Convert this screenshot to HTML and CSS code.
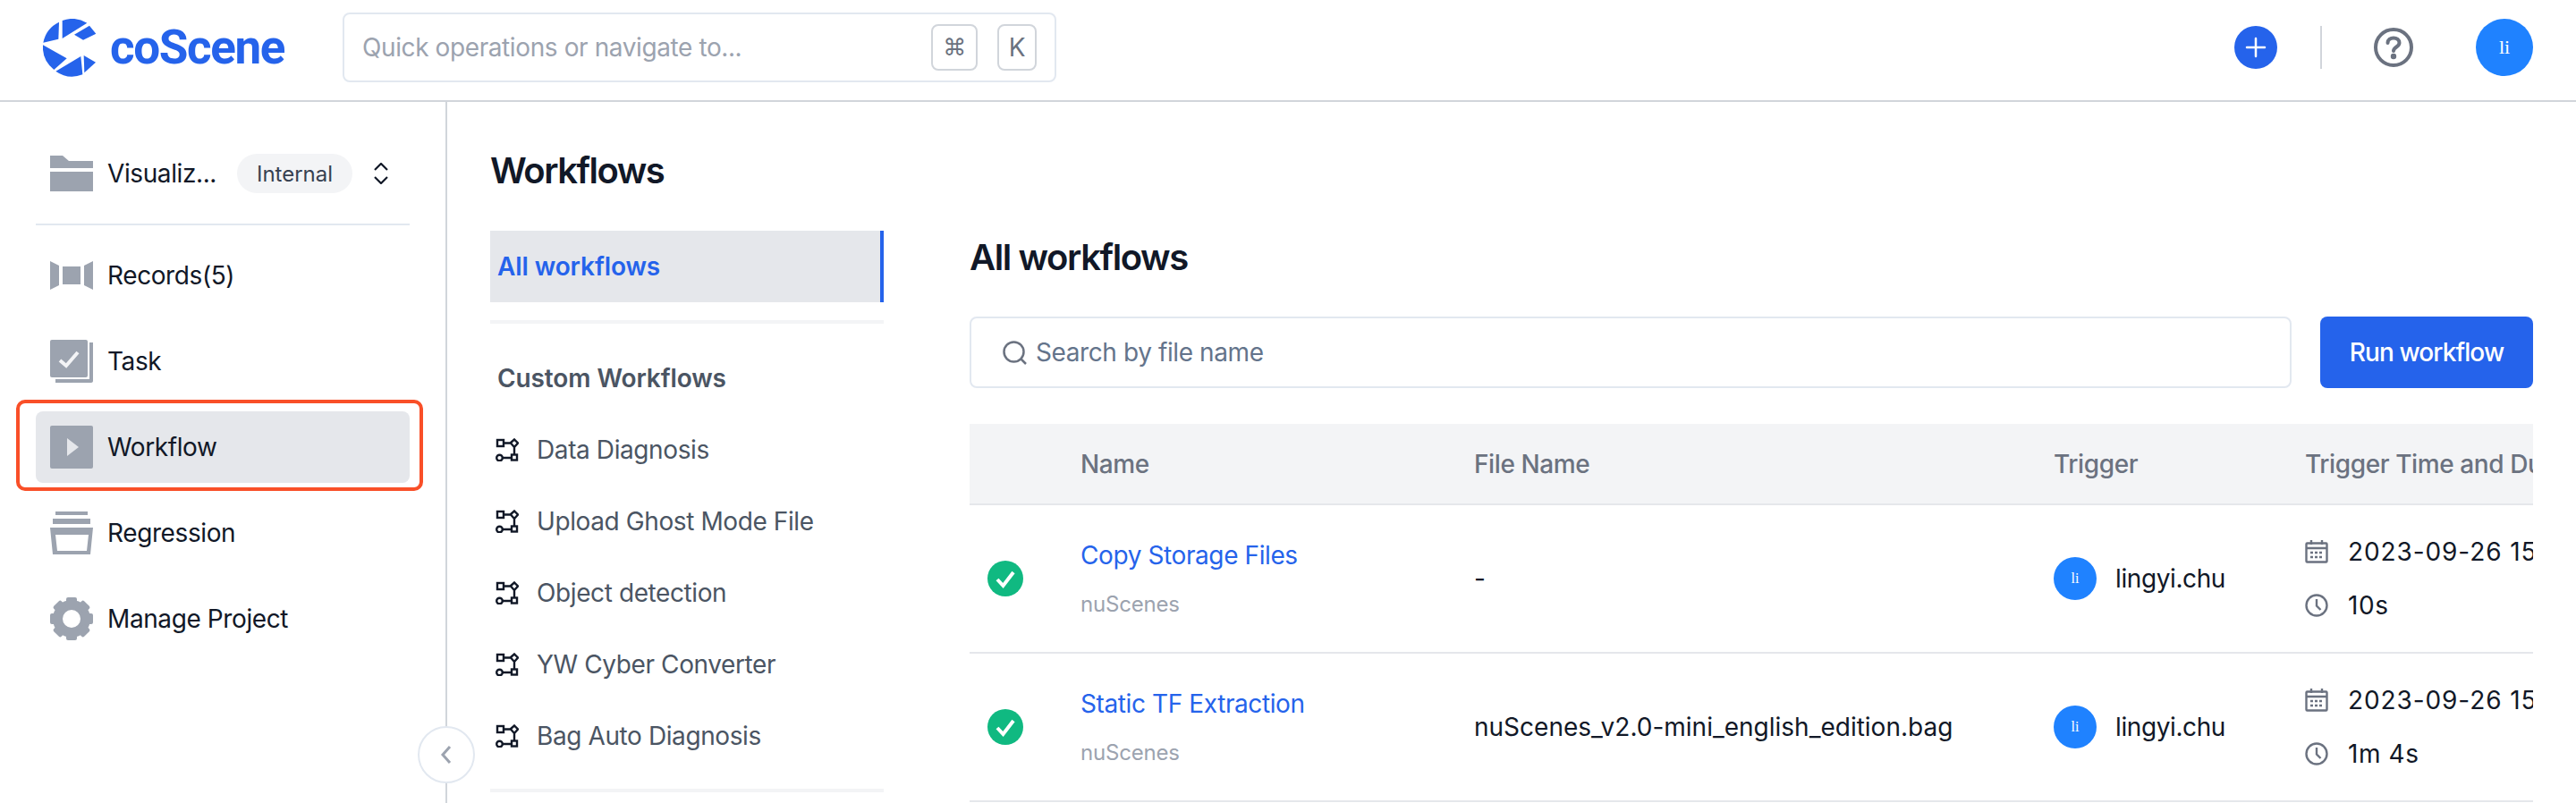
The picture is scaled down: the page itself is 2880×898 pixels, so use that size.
FILE: index.html
```html
<!DOCTYPE html>
<html lang="en">
<head>
    <meta charset="UTF-8" />
    <title>coScene - Workflows</title>
    <link rel="stylesheet" href="styles.css">
</head>
<body>

    <div class="header">
        <div class="brand">
            <svg class="brand-mark" viewBox="85 32 180 195" fill="#2563eb">
                <path d="M139 43A97 97 0 0 0 86 112L137 100Z" />
                <path d="M150 38A97 97 0 0 1 233 46L150 98Z" />
                <path d="M190 85L241 55L263 82L220 103Z" />
                <path d="M85 120L165 165L122 203A97 97 0 0 1 85 120Z" />
                <path d="M128 208L212 158L218 219A97 97 0 0 1 128 208Z" />
                <path d="M222 155L262 178L224 213Z" />
            </svg>
            <span class="brand-name">coScene</span>
        </div>
        <div class="quick-search">
            <span class="quick-text">Quick operations or navigate to...</span>
            <span class="kbd kbd-cmd">⌘</span>
            <span class="kbd kbd-k">K</span>
        </div>
        <div class="header-actions">
            <span class="add-btn">
                <svg width="24" height="24" viewBox="0 0 24 24" fill="none" stroke="#fff" stroke-width="2.5" stroke-linecap="round"><path d="M12 2V22M2 12H22" /></svg>
            </span>
            <span class="header-sep"></span>
            <svg class="help-icon" width="44" height="44" viewBox="0 0 44 44" fill="none" stroke="#6b7280" stroke-width="4" stroke-linecap="round">
                <circle cx="22" cy="22" r="20" />
                <path d="M15.5 17C15.5 13.5 18.5 11.5 22 11.5C25.500 11.500 28.500 13.500 28.500 17C28.500 21.500 22 21.500 22 26" />
                <circle cx="22" cy="32" r="1.2" fill="#6b7280" />
            </svg>
            <span class="avatar avatar-lg">li</span>
        </div>
    </div>

    <div class="main">
        <div class="sidebar">
            <div class="project-row">
                <svg class="side-icon" width="48" height="40" viewBox="0 0 48 40" fill="#9ca3af">
                    <path d="M0 0H14L21 6H48V14H0Z" />
                    <rect y="18" width="48" height="22" />
                </svg>
                <span class="project-name">Visualiz...</span>
                <span class="chip">Internal</span>
                <svg class="updown" width="16" height="24" viewBox="0 0 16 24" fill="none" stroke="#111827" stroke-width="2.2">
                    <path d="M1 8L8 1L15 8M1 16L8 23L15 16" />
                </svg>
            </div>
            <div class="side-divider"></div>
            <div class="nav">
                <div class="nav-item">
                    <svg class="side-icon" width="48" height="32" viewBox="0 0 48 32" fill="#9ca3af">
                        <path d="M0 0L10 5V27L0 32Z" />
                        <rect x="14" y="6" width="20" height="20" />
                        <path d="M48 0L38 5V27L48 32Z" />
                    </svg>
                    Records(5)
                </div>
                <div class="nav-item">
                    <svg class="side-icon" width="48" height="48" viewBox="0 0 48 48">
                        <rect width="42" height="42" rx="2" fill="#9ca3af" />
                        <path d="M44 3H48V46C48 47 47 48 46 48H6V44H44Z" fill="#9ca3af" />
                        <path d="M11 23L18 29L31 14" fill="none" stroke="#f3f4f6" stroke-width="4" />
                    </svg>
                    Task
                </div>
                <div class="nav-item nav-item-active">
                    <svg class="side-icon" width="48" height="48" viewBox="0 0 48 48">
                        <rect width="48" height="48" rx="2" fill="#9ca3af" />
                        <path d="M19 14L32 24L19 34Z" fill="#e5e7eb" />
                    </svg>
                    Workflow
                    <span class="highlight"></span>
                </div>
                <div class="nav-item">
                    <svg class="side-icon" width="48" height="48" viewBox="0 0 48 48" fill="#9ca3af">
                        <rect x="6" width="36" height="4" />
                        <rect x="3" y="8" width="42" height="6" />
                        <path fill-rule="evenodd" d="M0 18H48L45 48H3ZM6 26L8 44H41L43 26Z" />
                    </svg>
                    Regression
                </div>
                <div class="nav-item">
                    <svg class="side-icon" width="48" height="48" viewBox="0 0 48 48" fill="#9ca3af">
                        <circle cx="24" cy="24" r="15.500" fill="none" stroke="#9ca3af" stroke-width="11" />
                        <rect x="18" y="0" width="12" height="10" rx="2" />
                        <rect x="18" y="38" width="12" height="10" rx="2" />
                        <rect x="0" y="18" width="10" height="12" rx="2" />
                        <rect x="38" y="18" width="10" height="12" rx="2" />
                        <rect x="18" y="0" width="12" height="10" rx="2" transform="rotate(45 24 24)" />
                        <rect x="18" y="38" width="12" height="10" rx="2" transform="rotate(45 24 24)" />
                        <rect x="0" y="18" width="10" height="12" rx="2" transform="rotate(45 24 24)" />
                        <rect x="38" y="18" width="10" height="12" rx="2" transform="rotate(45 24 24)" />
                    </svg>
                    Manage Project
                </div>
            </div>
            <span class="collapse-btn">
                <svg width="16" height="22" viewBox="0 0 16 22" fill="none" stroke="#9ca3af" stroke-width="3"><path d="M12 2L4 11L12 20" /></svg>
            </span>
        </div>

        <div class="workflow-menu">
            <h1 class="menu-title">Workflows</h1>
            <div class="menu-active">All workflows</div>
            <div class="menu-divider"></div>
            <div class="menu-heading">Custom Workflows</div>
            <div class="menu-item">
                <svg class="node-icon" width="26" height="26" viewBox="0 0 26 26" fill="none" stroke="#111827" stroke-width="2.400"><rect x="2" y="2" width="7" height="7" /><path d="M9 5.500H16.500L21 1.500L25 5.500L21 10L17 5.500M21 10V18M18 22H8" /><rect x="18" y="18.500" width="6" height="6" /><circle cx="4.500" cy="22" r="3.300" /></svg>
                Data Diagnosis
            </div>
            <div class="menu-item">
                <svg class="node-icon" width="26" height="26" viewBox="0 0 26 26" fill="none" stroke="#111827" stroke-width="2.400"><rect x="2" y="2" width="7" height="7" /><path d="M9 5.500H16.500L21 1.500L25 5.500L21 10L17 5.500M21 10V18M18 22H8" /><rect x="18" y="18.500" width="6" height="6" /><circle cx="4.500" cy="22" r="3.300" /></svg>
                Upload Ghost Mode File
            </div>
            <div class="menu-item">
                <svg class="node-icon" width="26" height="26" viewBox="0 0 26 26" fill="none" stroke="#111827" stroke-width="2.400"><rect x="2" y="2" width="7" height="7" /><path d="M9 5.500H16.500L21 1.500L25 5.500L21 10L17 5.500M21 10V18M18 22H8" /><rect x="18" y="18.500" width="6" height="6" /><circle cx="4.500" cy="22" r="3.300" /></svg>
                Object detection
            </div>
            <div class="menu-item">
                <svg class="node-icon" width="26" height="26" viewBox="0 0 26 26" fill="none" stroke="#111827" stroke-width="2.400"><rect x="2" y="2" width="7" height="7" /><path d="M9 5.500H16.500L21 1.500L25 5.500L21 10L17 5.500M21 10V18M18 22H8" /><rect x="18" y="18.500" width="6" height="6" /><circle cx="4.500" cy="22" r="3.300" /></svg>
                YW Cyber Converter
            </div>
            <div class="menu-item">
                <svg class="node-icon" width="26" height="26" viewBox="0 0 26 26" fill="none" stroke="#111827" stroke-width="2.400"><rect x="2" y="2" width="7" height="7" /><path d="M9 5.500H16.500L21 1.500L25 5.500L21 10L17 5.500M21 10V18M18 22H8" /><rect x="18" y="18.500" width="6" height="6" /><circle cx="4.500" cy="22" r="3.300" /></svg>
                Bag Auto Diagnosis
            </div>
            <div class="menu-divider menu-divider-end"></div>
        </div>

        <div class="workflow-list">
            <h2 class="list-title">All workflows</h2>
            <div class="toolbar">
                <div class="search-box">
                    <svg width="27" height="27" viewBox="0 0 27 27" fill="none" stroke="#6b7280" stroke-width="2.500"><circle cx="12.500" cy="12.500" r="11" /><path d="M20.500 20.500L26 26" /></svg>
                    <span>Search by file name</span>
                </div>
                <button class="btn-run">Run workflow</button>
            </div>
            <div class="table-wrap">
                <table class="runs">
                    <thead>
                        <tr>
                            <th class="col-status"></th>
                            <th class="col-name">Name</th>
                            <th class="col-file">File Name</th>
                            <th class="col-trigger">Trigger</th>
                            <th class="col-time">Trigger Time and Duration</th>
                        </tr>
                    </thead>
                    <tbody>
                        <tr>
                            <td>
                                <svg class="status-icon" width="40" height="40" viewBox="0 0 40 40"><circle cx="20" cy="20" r="20" fill="#10b981" /><path d="M11 21L17.500 28L29 13" fill="none" stroke="#fff" stroke-width="4" /></svg>
                            </td>
                            <td>
                                <div class="run-name">Copy Storage Files</div>
                                <div class="run-sub">nuScenes</div>
                            </td>
                            <td class="file-cell">-</td>
                            <td>
                                <div class="user"><span class="avatar avatar-sm">li</span>lingyi.chu</div>
                            </td>
                            <td>
                                <div class="time-row time-date">
                                    <svg width="26" height="26" viewBox="0 0 26 26" fill="none" stroke="#6b7280" stroke-width="2.400"><rect x="1.500" y="3.500" width="23" height="21" rx="1" /><path d="M7 0V5M19 0V5M1.500 9H24.500" /><path d="M6 14H20M6 19H20" stroke-width="2.600" stroke-dasharray="3 2" /></svg>
                                    2023-09-26 15:42:18
                                </div>
                                <div class="time-row">
                                    <svg width="26" height="26" viewBox="0 0 26 26" fill="none" stroke="#6b7280" stroke-width="2.400"><circle cx="13" cy="13" r="11.500" /><path d="M13 6V13.500L17.500 18" /></svg>
                                    10s
                                </div>
                            </td>
                        </tr>
                        <tr>
                            <td>
                                <svg class="status-icon" width="40" height="40" viewBox="0 0 40 40"><circle cx="20" cy="20" r="20" fill="#10b981" /><path d="M11 21L17.500 28L29 13" fill="none" stroke="#fff" stroke-width="4" /></svg>
                            </td>
                            <td>
                                <div class="run-name">Static TF Extraction</div>
                                <div class="run-sub">nuScenes</div>
                            </td>
                            <td class="file-cell">nuScenes_v2.0-mini_english_edition.bag</td>
                            <td>
                                <div class="user"><span class="avatar avatar-sm">li</span>lingyi.chu</div>
                            </td>
                            <td>
                                <div class="time-row time-date">
                                    <svg width="26" height="26" viewBox="0 0 26 26" fill="none" stroke="#6b7280" stroke-width="2.400"><rect x="1.500" y="3.500" width="23" height="21" rx="1" /><path d="M7 0V5M19 0V5M1.500 9H24.500" /><path d="M6 14H20M6 19H20" stroke-width="2.600" stroke-dasharray="3 2" /></svg>
                                    2023-09-26 15:40:02
                                </div>
                                <div class="time-row">
                                    <svg width="26" height="26" viewBox="0 0 26 26" fill="none" stroke="#6b7280" stroke-width="2.400"><circle cx="13" cy="13" r="11.500" /><path d="M13 6V13.500L17.500 18" /></svg>
                                    1m 4s
                                </div>
                            </td>
                        </tr>
                    </tbody>
                </table>
            </div>
        </div>
    </div>

</body>
</html>
```

FILE: styles.css
```css
* {
    box-sizing: border-box;
}
html, body {
    height: 100%;
}
body {
    margin: 0;
    font-family: Inter, "Noto Sans", sans-serif;
    font-size: 28px;
    letter-spacing: -0.4px;
    color: #111827;
    background: #fff;
    display: flex;
    flex-direction: column;
    overflow: hidden;
}
.header {
    display: flex;
    align-items: center;
    height: 114px;
    flex-shrink: 0;
    padding: 0 48px 6px;
    border-bottom: 2px solid #d1d5db;
}
.brand {
    display: flex;
    align-items: center;
    width: 335px;
    gap: 15px;
}
.brand-mark {
    width: 60px;
    height: 65px;
}
.brand-name {
    font-family: Roboto, sans-serif;
    font-weight: 700;
    font-size: 53px;
    line-height: 1;
    letter-spacing: -1.4px;
    color: #2563eb;
}
.quick-search {
    display: flex;
    align-items: center;
    width: 798px;
    height: 78px;
    padding: 0 20px;
    border: 2px solid #e2e8f0;
    border-radius: 8px;
}
.quick-text {
    flex: 1;
    color: #9ca3af;
}
.kbd {
    display: flex;
    align-items: center;
    justify-content: center;
    height: 52px;
    border: 2px solid #d1d5db;
    border-radius: 8px;
    color: #6b7280;
}
.kbd-cmd {
    width: 52px;
    margin-right: 22px;
    font-family: "DejaVu Sans", sans-serif;
    font-size: 26px;
}
.kbd-k {
    width: 44px;
}
.header-actions {
    margin-left: auto;
    display: flex;
    align-items: center;
}
.add-btn {
    display: flex;
    align-items: center;
    justify-content: center;
    width: 48px;
    height: 48px;
    border-radius: 50%;
    background: #2563eb;
}
.header-sep {
    width: 2px;
    height: 48px;
    margin: 0 58px 0 48px;
    background: #d1d5db;
}
.avatar {
    display: flex;
    align-items: center;
    justify-content: center;
    border-radius: 50%;
    flex-shrink: 0;
    background: #1f82ff;
    color: #fff;
    font-family: "Liberation Serif", serif;
    letter-spacing: 0;
}
.avatar-lg {
    width: 64px;
    height: 64px;
    margin-left: 70px;
    font-size: 22px;
}
.avatar-sm {
    width: 48px;
    height: 48px;
    font-size: 16px;
}

.main {
    flex: 1;
    display: flex;
    min-height: 0;
}
.sidebar {
    position: relative;
    width: 500px;
    flex-shrink: 0;
    padding: 48px 40px 0;
    border-right: 2px solid #d1d5db;
}
.project-row {
    display: flex;
    align-items: center;
    height: 64px;
    padding-left: 16px;
}
.side-icon {
    flex-shrink: 0;
}
.project-name {
    margin-left: 16px;
    width: 145px;
    flex-shrink: 0;
}
.chip {
    display: flex;
    align-items: center;
    justify-content: center;
    width: 129px;
    height: 44px;
    border-radius: 22px;
    background: #f3f4f6;
    color: #374151;
    font-size: 24px;
    letter-spacing: 0;
}
.updown {
    margin-left: 24px;
}
.side-divider {
    height: 2px;
    margin-top: 24px;
    background: #e2e8f0;
}
.nav {
    margin-top: 16px;
    display: flex;
    flex-direction: column;
    gap: 16px;
}
.nav-item {
    position: relative;
    display: flex;
    align-items: center;
    gap: 16px;
    height: 80px;
    padding-left: 16px;
    border-radius: 8px;
}
.nav-item-active {
    background: #e5e7eb;
}
.highlight {
    position: absolute;
    top: -13px;
    bottom: -9px;
    left: -22px;
    right: -15px;
    border: 4px solid #f94f28;
    border-radius: 10px;
}
.collapse-btn {
    position: absolute;
    top: 698px;
    right: -33px;
    display: flex;
    align-items: center;
    justify-content: center;
    width: 64px;
    height: 64px;
    border: 2px solid #e2e8f0;
    border-radius: 50%;
    background: #fff;
}

.workflow-menu {
    width: 440px;
    flex-shrink: 0;
    margin-left: 48px;
    padding-top: 49px;
}
.menu-title {
    margin: 0;
    font-size: 40px;
    line-height: 56px;
    font-weight: 600;
    letter-spacing: -1.5px;
}
.menu-active {
    display: flex;
    align-items: center;
    height: 80px;
    margin-top: 39px;
    padding-left: 8px;
    border-right: 4px solid #2563eb;
    background: #e5e7eb;
    color: #2563eb;
    font-weight: 600;
    letter-spacing: -0.1px;
}
.menu-divider {
    height: 4px;
    margin-top: 20px;
    background: #f3f4f6;
}
.menu-divider-end {
    margin-top: 19px;
}
.menu-heading {
    display: flex;
    align-items: center;
    height: 81px;
    margin-top: 20px;
    padding-left: 8px;
    color: #4b5563;
    font-weight: 600;
    letter-spacing: -0.1px;
}
.menu-item {
    display: flex;
    align-items: center;
    gap: 20px;
    height: 80px;
    padding-left: 6px;
    color: #4b5563;
}
.node-icon {
    flex-shrink: 0;
}

.workflow-list {
    flex: 1;
    min-width: 0;
    margin: 0 48px 0 96px;
    padding-top: 146px;
}
.list-title {
    margin: 0;
    font-size: 40px;
    line-height: 56px;
    font-weight: 600;
    letter-spacing: -1.4px;
}
.toolbar {
    display: flex;
    gap: 32px;
    margin-top: 38px;
}
.search-box {
    flex: 1;
    display: flex;
    align-items: center;
    gap: 10px;
    height: 80px;
    padding: 0 35px;
    border: 2px solid #e2e8f0;
    border-radius: 8px;
    color: #64748b;
}
.btn-run {
    width: 238px;
    height: 80px;
    border: none;
    border-radius: 8px;
    background: #2563eb;
    color: #fff;
    font-family: inherit;
    font-size: 28px;
    font-weight: 500;
    letter-spacing: -0.9px;
}
.table-wrap {
    margin-top: 40px;
    overflow: hidden;
}
.runs {
    width: 2093px;
    table-layout: fixed;
    border-collapse: collapse;
}
.runs th {
    height: 90px;
    padding: 0;
    text-align: left;
    font-weight: 500;
    color: #6b7280;
    background: #f3f4f6;
    border-bottom: 2px solid #e5e7eb;
}
.runs td {
    height: 166px;
    padding: 0;
    border-bottom: 2px solid #e5e7eb;
}
.col-status {
    width: 124px;
}
.col-name {
    width: 440px;
}
.col-file {
    width: 648px;
}
.col-trigger {
    width: 281px;
}
.file-cell {
    letter-spacing: 0;
}
.status-icon {
    display: block;
    margin-left: 20px;
}
.run-name {
    color: #2563eb;
    line-height: 40px;
    padding-top: 2px;
}
.run-sub {
    margin-top: 15px;
    color: #9ca3af;
    font-size: 24px;
    line-height: 40px;
    letter-spacing: -0.2px;
}
.user {
    display: flex;
    align-items: center;
    gap: 21px;
}
.time-row {
    display: flex;
    align-items: center;
    gap: 22px;
    height: 40px;
    letter-spacing: 0.6px;
    white-space: nowrap;
}
.time-row + .time-row {
    margin-top: 20px;
}
.time-date {
    letter-spacing: 0.9px;
}
```
